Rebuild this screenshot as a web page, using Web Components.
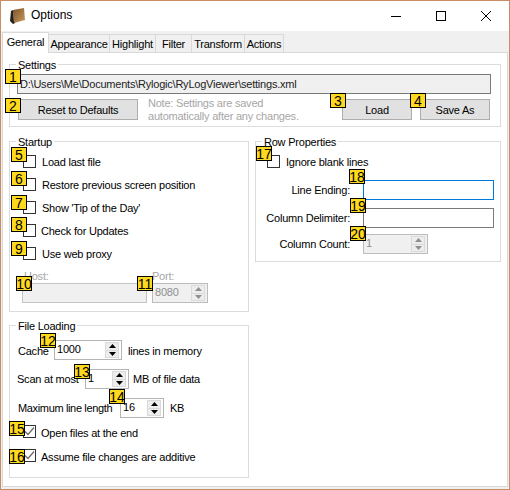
<!DOCTYPE html>
<html>
<head>
<meta charset="utf-8">
<title>Options</title>
<style>
    html, body { margin: 0; padding: 0; background: #f0f0f0; }
    body { font-family: 'Liberation Sans', Arial, sans-serif; font-size: 11px; letter-spacing: -0.22px; color: #000; }
</style>
</head>
<body>
<options-window></options-window>
<script>
class TitleBar extends HTMLElement {
    constructor() {
        super()
        this.attachShadow({ mode: "open" }).innerHTML = `
<style>
    :host { display: flex; height: 30px; background: #fff; align-items: center; }
    svg { display: block; }
    .icon { margin: -1px 0 0 9px; }
    .title { margin: -2px 0 0 6px; font-size: 12px; letter-spacing: 0; }
    .btn { height: 30px; width: 45px; display: flex; align-items: center; justify-content: center; }
    .first { margin-left: auto; }
    .close { width: 46px; }
</style>
<svg class="icon" width="15" height="16" viewBox="0 0 15 16">
    <defs><linearGradient id="g" x1="0" y1="0" x2="1" y2="1"><stop offset="0" stop-color="#7e5224"/><stop offset="1" stop-color="#c99c62"/></linearGradient></defs>
    <path d="M3 2 L14 0 L15 12 L4 15 Z" fill="url(#g)"/>
    <path d="M3 2 L1 3 L0 13 L3 16 L5 15 L4 14 Z" fill="#26221e"/>
</svg>
<span class="title">Options</span>
<div class="btn first"><svg width="10" height="10"><path d="M0 5.5 H10" stroke="#000" fill="none"/></svg></div>
<div class="btn"><svg width="10" height="10"><rect x="0.5" y="0.5" width="9" height="9" stroke="#000" fill="none"/></svg></div>
<div class="btn close"><svg width="10" height="10"><path d="M0 0 L10 10 M10 0 L0 10" stroke="#000" fill="none"/></svg></div>
`
    }
}

class TabItem extends HTMLElement {
    constructor() {
        super()
        this.attachShadow({ mode: "open" }).innerHTML = `
<style>
    :host {
        display: flex;
        box-sizing: border-box;
        height: 18px;
        align-items: center;
        justify-content: center;
        border: 1px solid #d9d9d9;
        border-bottom: 0;
        margin-left: -1px;
        background: #f0f0f0;
    }
    :host([selected]) {
        height: 21px;
        margin: 0 0 -1px 0;
        padding-bottom: 3px;
        background: #fff;
        position: relative;
    }
</style>
<slot></slot>
`
    }
}

class GroupBox extends HTMLElement {
    constructor() {
        super()
        this.attachShadow({ mode: "open" }).innerHTML = `
<style>
    :host { display: block; border: 1px solid #dcdcdc; }
    .legend {
        display: block;
        width: fit-content;
        height: 14px;
        line-height: 14px;
        margin: -7px 0 0 6px;
        padding: 0 2px 0 2px;
        background: #fff;
    }
</style>
<span class="legend"></span>
<slot></slot>
`
    }
    connectedCallback() {
        this.shadowRoot.querySelector(".legend").textContent = this.getAttribute("label")
    }
}

class CheckRow extends HTMLElement {
    constructor() {
        super()
        this.attachShadow({ mode: "open" }).innerHTML = `
<style>
    :host { display: flex; height: 23px; align-items: center; }
    .box { box-sizing: border-box; width: 13px; height: 13px; border: 1px solid #333; background: #fff; }
    svg { display: none; }
    :host([checked]) svg { display: block; }
    .text { margin-left: var(--text-gap, 6px); padding-top: var(--text-drop, 1px); }
</style>
<div class="box"><svg width="11" height="11"><path d="M1 5.5 L4 8.5 L10 1.5" stroke="#6e6e6e" stroke-width="1.4" fill="none"/></svg></div>
<span class="text"><slot></slot></span>
`
    }
}

class SpinBox extends HTMLElement {
    constructor() {
        super()
        this.attachShadow({ mode: "open" }).innerHTML = `
<style>
    :host {
        display: flex;
        box-sizing: border-box;
        height: 20px;
        border: 1px solid #b4b4b4;
        background: #fff;
        padding: 1px 2px 1px 2px;
    }
    :host([disabled]) { background: #f0f0f0; color: #8f8f8f; border-color: #bcbcbc; }
    .value { flex: 1; line-height: 14px; overflow: hidden; }
    .btns { width: 14px; display: flex; flex-direction: column; }
    .up, .down {
        flex: 1;
        display: flex;
        align-items: center;
        justify-content: center;
        background: #ededed;
        border: 1px solid #dadada;
    }
    .down { border-top: 0; }
    svg { display: block; }
    path { fill: #000; }
    :host([disabled]) path { fill: #8f8f8f; }
</style>
<span class="value"></span>
<div class="btns">
    <div class="up"><svg width="7" height="4"><path d="M3.5 0 L7 4 H0 Z"/></svg></div>
    <div class="down"><svg width="7" height="4"><path d="M0 0 H7 L3.5 4 Z"/></svg></div>
</div>
`
    }
    connectedCallback() {
        this.shadowRoot.querySelector(".value").textContent = this.getAttribute("value")
    }
}

class TextField extends HTMLElement {
    constructor() {
        super()
        this.attachShadow({ mode: "open" }).innerHTML = `
<style>
    :host {
        display: flex;
        box-sizing: border-box;
        height: 20px;
        align-items: center;
        padding-left: 2px;
        border: 1px solid #7a7a7a;
        background: #fff;
    }
    :host([readonly]) { background: #f0f0f0; }
    :host([focused]) { border-color: #0078d7; }
    :host([disabled]) { background: #f0f0f0; border-color: #c4c4c4; }
</style>
<slot></slot>
`
    }
}

class WinButton extends HTMLElement {
    constructor() {
        super()
        this.attachShadow({ mode: "open" }).innerHTML = `
<style>
    :host {
        display: flex;
        box-sizing: border-box;
        height: 21px;
        align-items: center;
        justify-content: center;
        border: 1px solid #adadad;
        background: #e1e1e1;
    }
</style>
<slot></slot>
`
    }
}

// numbered callouts pasted over the form, placed by window coordinates
class NumBadge extends HTMLElement {
    constructor() {
        super()
        this.attachShadow({ mode: "open" }).innerHTML = `
<style>
    :host {
        position: absolute;
        display: flex;
        box-sizing: border-box;
        width: 16px;
        height: 15px;
        align-items: center;
        justify-content: center;
        border: 1px solid #000;
        background: #ffd91e;
        font-size: 14px;
        letter-spacing: 0;
        overflow: hidden;
    }
</style>
<slot></slot>
`
    }
    connectedCallback() {
        this.style.left = this.getAttribute("x") + "px"
        this.style.top = this.getAttribute("y") + "px"
    }
}

class OptionsWindow extends HTMLElement {
    constructor() {
        super()
        this.attachShadow({ mode: "open" }).innerHTML = `
<style>
    :host {
        display: block;
        position: relative;
        box-sizing: border-box;
        width: 510px;
        height: 490px;
        border: 1px solid #c88d62;
        background: #f0f0f0;
    }
    .tabs { display: flex; height: 21px; align-items: flex-end; padding-left: 1px; }
    .page {
        box-sizing: border-box;
        width: 506px;
        height: 435px;
        margin-left: 1px;
        padding: 11px 0 0 6px;
        border: 1px solid #d9d9d9;
        background: #fff;
    }
    .settings { width: 492px; height: 63px; box-sizing: border-box; }
    .path { width: 474px; margin: 2px 0 0 7px; color: #222; }
    .actions { display: flex; margin: 5px 0 0 8px; }
    .note { width: 194px; margin: -2px 0 0 10px; line-height: 13px; color: #a6a6a6; }
    .columns { display: grid; grid-template-columns: 240px 246px; column-gap: 6px; margin-top: 14px; align-items: start; }
    .stack { display: flex; flex-direction: column; row-gap: 13px; }
    .checks { padding-left: 13px; margin-top: 1px; }
    .proxy { display: grid; grid-template-columns: 125px 56px; column-gap: 5px; margin: 4px 0 8px 12px; color: #a6a6a6; }
    .proxy span { line-height: 14px; padding-left: 2px; }
    .proxy .port { padding-left: 0; }
    .line { display: flex; align-items: center; height: 20px; }
    .rowlabel { width: 94px; text-align: right; margin-right: 13px; }
    .file { padding-bottom: 10px; }
    .file .line { margin-top: 9px; }
    .file .line > span:first-child { white-space: nowrap; }
    .row-props { padding-bottom: 7px; }
</style>
<title-bar></title-bar>
<div class="tabs">
    <tab-item selected style="width:47px">General</tab-item>
    <tab-item style="width:62px">Appearance</tab-item>
    <tab-item style="width:47px">Highlight</tab-item>
    <tab-item style="width:37px">Filter</tab-item>
    <tab-item style="width:54px">Transform</tab-item>
    <tab-item style="width:40px">Actions</tab-item>
</div>
<div class="page">
    <group-box class="settings" label="Settings">
        <text-field class="path" readonly>D:\\Users\\Me\\Documents\\Rylogic\\RyLogViewer\\settings.xml</text-field>
        <div class="actions">
            <win-button style="width:120px">Reset to Defaults</win-button>
            <div class="note">Note: Settings are saved<br>automatically after any changes.</div>
            <win-button style="width:70px">Load</win-button>
            <win-button style="width:70px;margin-left:8px">Save As</win-button>
        </div>
    </group-box>
    <div class="columns">
        <div class="stack">
            <group-box label="Startup">
                <div class="checks">
                    <check-row>Load last file</check-row>
                    <check-row>Restore previous screen position</check-row>
                    <check-row>Show 'Tip of the Day'</check-row>
                    <check-row style="--text-gap:5px">Check for Updates</check-row>
                    <check-row>Use web proxy</check-row>
                </div>
                <div class="proxy">
                    <span>Host:</span>
                    <span class="port">Port:</span>
                    <text-field disabled></text-field>
                    <spin-box value="8080" disabled></spin-box>
                </div>
            </group-box>
            <group-box class="file" label="File Loading">
                <div class="line" style="margin-top:7px;padding-left:8px">
                    <span style="width:36px;padding-top:1px">Cache</span>
                    <spin-box value="1000" style="width:68px"></spin-box>
                    <span style="margin-left:6px;padding-top:1px">lines in memory</span>
                </div>
                <div class="line" style="padding-left:7px">
                    <span style="width:68px">Scan at most</span>
                    <spin-box value="1" style="width:44px"></spin-box>
                    <span style="margin-left:4px">MB of file data</span>
                </div>
                <div class="line" style="padding-left:8px">
                    <span style="width:102px;letter-spacing:-0.35px">Maximum line length</span>
                    <spin-box value="16" style="width:44px"></spin-box>
                    <span style="margin-left:6px">KB</span>
                </div>
                <div class="checks" style="margin-top:2px;--text-gap:5px;--text-drop:3px">
                    <check-row checked>Open files at the end</check-row>
                    <check-row checked style="margin-top:1px">Assume file changes are additive</check-row>
                </div>
            </group-box>
        </div>
        <group-box class="row-props" label="Row Properties">
            <div class="checks" style="padding-left:11px"><check-row>Ignore blank lines</check-row></div>
            <div class="line" style="margin-top:7px"><span class="rowlabel">Line Ending:</span><text-field focused style="width:131px"></text-field></div>
            <div class="line" style="margin-top:8px"><span class="rowlabel">Column Delimiter:</span><text-field style="width:131px"></text-field></div>
            <div class="line" style="margin-top:6px"><span class="rowlabel">Column Count:</span><spin-box value="1" disabled style="width:65px"></spin-box></div>
        </group-box>
    </div>
</div>
<num-badge x="4" y="68">1</num-badge>
<num-badge x="4" y="97">2</num-badge>
<num-badge x="329" y="92">3</num-badge>
<num-badge x="409" y="92">4</num-badge>
<num-badge x="10" y="146">5</num-badge>
<num-badge x="10" y="170">6</num-badge>
<num-badge x="10" y="194">7</num-badge>
<num-badge x="10" y="216">8</num-badge>
<num-badge x="10" y="240">9</num-badge>
<num-badge x="15" y="275">10</num-badge>
<num-badge x="136" y="275">11</num-badge>
<num-badge x="39" y="332">12</num-badge>
<num-badge x="73" y="363">13</num-badge>
<num-badge x="108" y="388">14</num-badge>
<num-badge x="8" y="420">15</num-badge>
<num-badge x="8" y="448">16</num-badge>
<num-badge x="255" y="145">17</num-badge>
<num-badge x="348" y="168">18</num-badge>
<num-badge x="349" y="197">19</num-badge>
<num-badge x="349" y="225">20</num-badge>
`
    }
}

customElements.define('title-bar', TitleBar)
customElements.define('tab-item', TabItem)
customElements.define('group-box', GroupBox)
customElements.define('check-row', CheckRow)
customElements.define('spin-box', SpinBox)
customElements.define('text-field', TextField)
customElements.define('win-button', WinButton)
customElements.define('num-badge', NumBadge)
customElements.define('options-window', OptionsWindow)
</script>
</body>
</html>
